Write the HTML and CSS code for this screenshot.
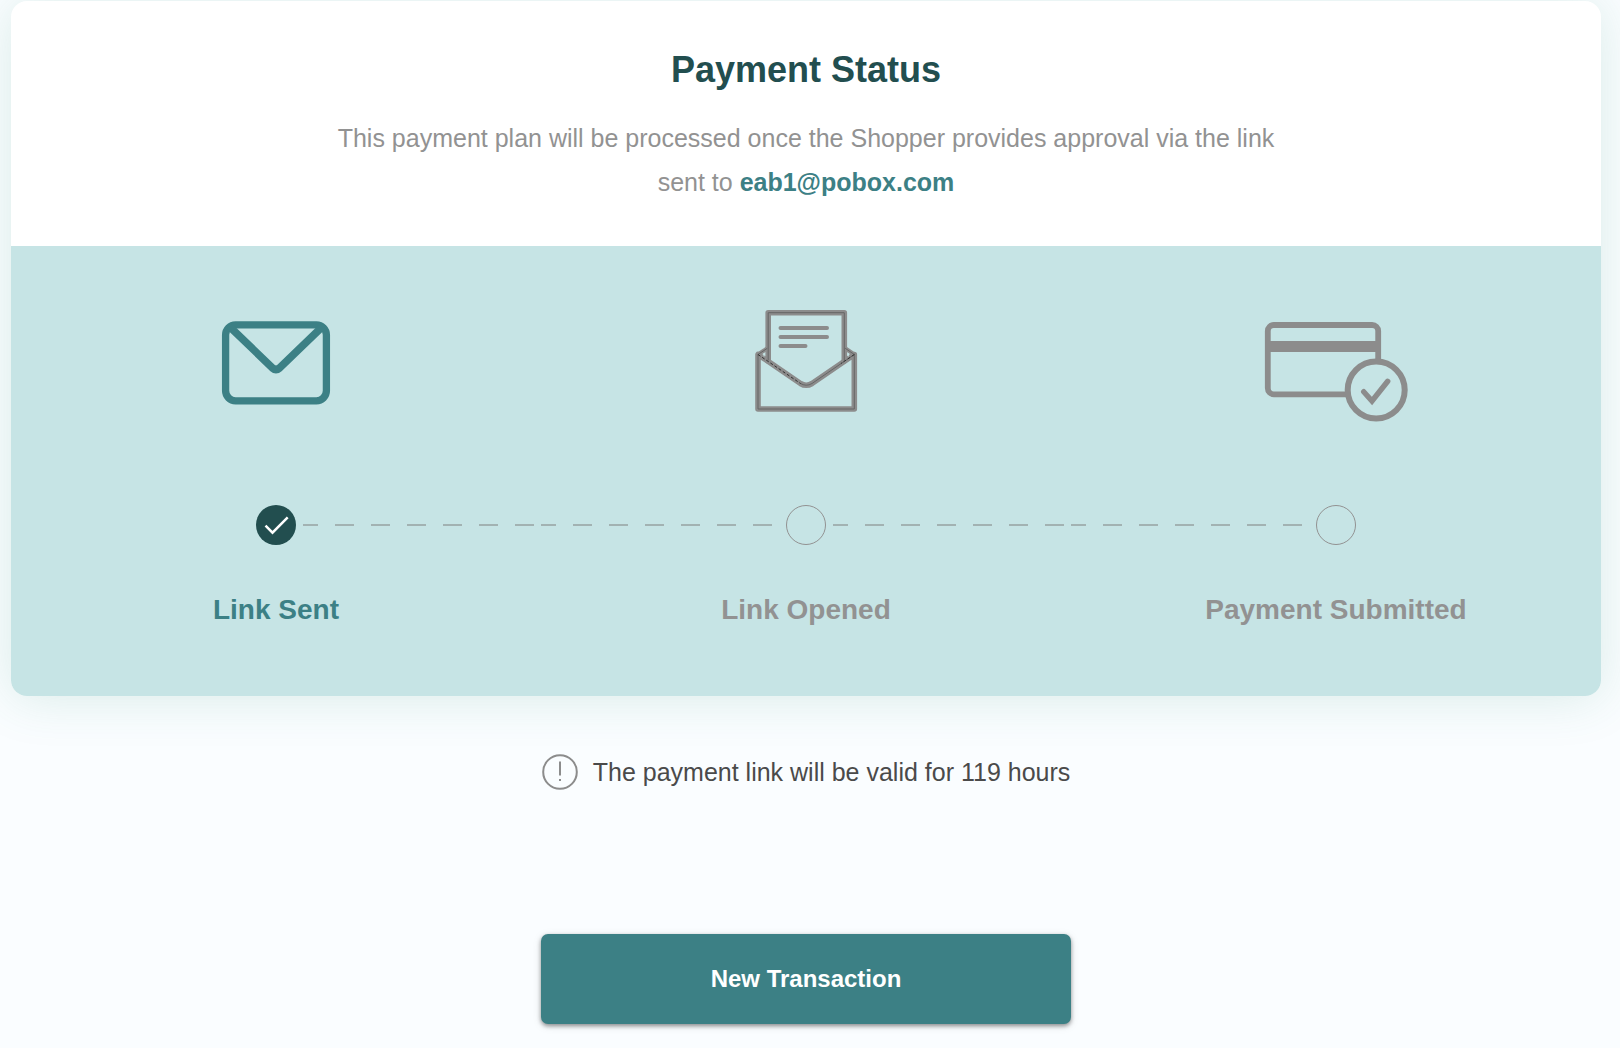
FILE: index.html
```html
<!DOCTYPE html>
<html lang="en">
<head>
    <meta charset="UTF-8">
    <meta name="viewport" content="width=device-width, initial-scale=1.0">
    <title>Payment Status</title>
    <link rel="stylesheet" href="styles.css">
</head>
<body>
    <main class="page">
        <section class="card">
            <div class="card-header">
                <h1>Payment Status</h1>
                <p>This payment plan will be processed once the Shopper provides approval via the link<br>sent to <strong>eab1@pobox.com</strong></p>
            </div>
            <ol class="steps">
                <li class="step active">
                    <svg class="step-icon" viewBox="0 0 150 120" aria-hidden="true">
                        <rect x="24.6" y="21.8" width="100.8" height="76" rx="10" stroke-width="7.3"/>
                        <path d="M30 25 L71.5 65 Q75 68 78.5 65 L120 25" stroke-width="7.6"/>
                    </svg>
                    <div class="track">
                        <span class="line hidden"></span>
                        <span class="dot">
                            <svg viewBox="0 0 40 40" aria-hidden="true"><path d="M9.5 20.7 L16.5 27.7 L31.7 12.3"/></svg>
                        </span>
                        <span class="line"></span>
                    </div>
                    <h2>Link Sent</h2>
                </li>
                <li class="step">
                    <svg class="step-icon" viewBox="0 0 150 120" aria-hidden="true">
                        <g stroke-width="5.6">
                            <path d="M37.2 58 V9.7 H113.3 V58"/>
                            <path d="M27 51.5 V106 H123.3 V51.5 L81 80.5 Q75.2 84 69.5 80.5 Z"/>
                        </g>
                        <path d="M27 51.5 L36 45.5 M123.3 51.5 L114.5 45.5" stroke-width="4"/>
                        <path d="M49.5 25 H96 M49.5 34 H96 M49.5 43 H74.5" stroke-width="4"/>
                        <path class="seam" d="M37.2 57 V9.7 H113.3 V57 M27 51.5 V106 H123.3 V51.5 M27 51.5 L36 45.5 M123.3 51.5 L114.5 45.5 M123.3 51.5 L81 80.5 Q75.2 84 69.5 80.5"/>
                        <path class="seam stitch" d="M27 51.5 L69.5 80.5 M123.3 51.5 L110 60.5"/>
                        <path class="stitch-light" d="M33 51 V53 M117.3 51 V53"/>
                    </svg>
                    <div class="track">
                        <span class="line"></span>
                        <span class="dot"></span>
                        <span class="line"></span>
                    </div>
                    <h2>Link Opened</h2>
                </li>
                <li class="step">
                    <svg class="step-icon" viewBox="0 0 150 120" aria-hidden="true">
                        <rect x="6.8" y="22" width="110.4" height="69.3" rx="6" stroke-width="5.8"/>
                        <path d="M7 43.6 H117" stroke-width="11" stroke-linecap="butt"/>
                        <circle class="badge" cx="115.2" cy="87" r="28.5" stroke-width="6"/>
                        <path d="M102.7 88.7 L111 98 L126.7 78.3" stroke-width="5.4" stroke-linejoin="miter"/>
                    </svg>
                    <div class="track">
                        <span class="line"></span>
                        <span class="dot"></span>
                        <span class="line hidden"></span>
                    </div>
                    <h2>Payment Submitted</h2>
                </li>
            </ol>
        </section>

        <div class="note">
            <svg viewBox="0 0 36 36" aria-hidden="true">
                <circle cx="18" cy="18" r="16.8"/>
                <path d="M18 7.5 V21.5 M18 25 V27"/>
            </svg>
            <p>The payment link will be valid for 119 hours</p>
        </div>

        <button type="button" class="btn">New Transaction</button>
    </main>
</body>
</html>
```

FILE: styles.css
```css
* {
    margin: 0;
    padding: 0;
    box-sizing: border-box;
}

body {
    background-color: #fafdff;
    color: #4a4a4a;
    font-family: "Liberation Sans", Arial, Helvetica, sans-serif;
    font-size: 25px;
}

.page {
    padding: 1px 19px 23px 11px;
    display: flex;
    flex-direction: column;
    align-items: center;
}

.card {
    width: 100%;
    border-radius: 16px;
    background-color: white;
    box-shadow: 0 2px 50px rgba(60, 150, 120, 0.17);
}

.card-header {
    padding: 49px 24px 42px;
    text-align: center;
}

.card-header h1 {
    color: #224e4f;
    font-size: 36px;
    line-height: 40px;
}

.card-header p {
    margin-top: 26px;
    color: #929292;
    line-height: 44px;
}

.card-header strong {
    color: #3c8085;
    font-size: 25px;
}

.steps {
    display: grid;
    grid-template-columns: repeat(3, 1fr);
    padding: 57px 0 70px;
    border-radius: 0 0 16px 16px;
    background-color: #c6e4e5;
    list-style: none;
}

.step {
    display: flex;
    flex-direction: column;
    align-items: center;
    color: #929292;
}

.step.active {
    color: #3c8085;
}

.step-icon {
    width: 150px;
    height: 120px;
    fill: none;
    stroke: #8c8c8c;
    stroke-linecap: round;
    stroke-linejoin: round;
}

.active .step-icon {
    stroke: #3c8085;
}

.step-icon .seam {
    stroke: #666666;
    stroke-width: 1;
}

.step-icon .stitch {
    stroke: #333333;
    stroke-dasharray: 3 2;
    stroke-linecap: butt;
}

.step-icon .stitch-light {
    stroke: #c6e4e5;
    stroke-width: 1;
}

.step-icon .badge {
    fill: #c6e4e5;
}

.track {
    display: flex;
    align-items: center;
    gap: 7px;
    width: 100%;
    margin-top: 82px;
}

.line {
    flex: 1;
    height: 2px;
    background: linear-gradient(to right, #a2b2b2 19px, transparent 19px) -4px 0 / 36px 2px repeat-x;
}

.line.hidden {
    visibility: hidden;
}

.dot {
    width: 40px;
    height: 40px;
    border: 1px solid #929292;
    border-radius: 50%;
}

.active .dot {
    border: none;
    background-color: #224e4f;
}

.dot svg {
    display: block;
    fill: none;
    stroke: white;
    stroke-width: 2.5;
}

.step h2 {
    margin-top: 49px;
    font-size: 28px;
    line-height: 32px;
}

.note {
    display: flex;
    align-items: center;
    gap: 15px;
    margin-top: 58px;
}

.note svg {
    width: 36px;
    height: 36px;
    fill: none;
    stroke: #8c8c8c;
    stroke-width: 2;
}

.btn {
    width: 33.33%;
    height: 90px;
    margin-top: 144px;
    border: none;
    border-radius: 7px;
    background-color: #3c8085;
    box-shadow: 0 2px 4px rgba(0, 0, 0, 0.4), 0 2px 10px rgba(0, 0, 0, 0.1);
    color: white;
    font-family: inherit;
    font-size: 24px;
    font-weight: bold;
    cursor: pointer;
}
```
